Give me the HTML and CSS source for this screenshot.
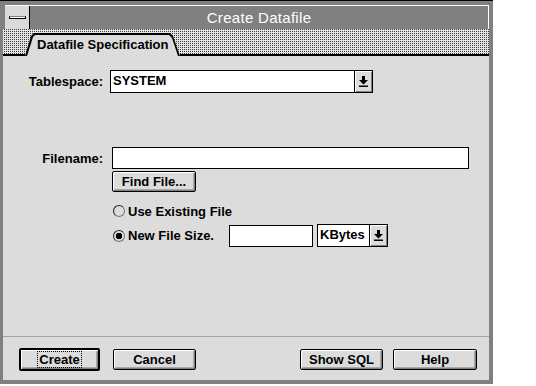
FILE: index.html
```html
<!DOCTYPE html>
<html lang="en">
<head>
    <meta charset="UTF-8">
    <title>Create Datafile</title>
    <link rel="stylesheet" href="styles.css">
</head>
<body>
<div class="window">
    <div class="titlebar">
        <div class="sysmenu"><div class="sysmenu-bar"></div></div>
        <div class="title">Create Datafile</div>
    </div>

    <div class="tabstrip">
        <div class="strip-line strip-left"></div>
        <div class="tab">
            <div class="tab-face">Datafile Specification</div>
        </div>
        <div class="strip-line strip-right"></div>
    </div>

    <div class="content">
        <div class="row row-tablespace">
            <span class="label">Tablespace:</span>
            <div class="combo combo-wide">
                <span class="combo-text">SYSTEM</span>
                <span class="combo-btn">
                    <svg width="9" height="11" viewBox="0 0 9 11"><path d="M3 0h3v4h3L4.5 8.5 0 4h3z"/><rect y="9.5" width="9" height="1.5"/></svg>
                </span>
            </div>
        </div>

        <div class="row row-filename">
            <span class="label">Filename:</span>
            <div class="textbox textbox-filename"></div>
        </div>

        <div class="indent">
            <button class="btn btn-find">Find File...</button>
        </div>

        <div class="row radio-row radio-row-first">
            <span class="radio"></span>
            <span class="radio-text">Use Existing File</span>
        </div>

        <div class="row radio-row radio-row-size">
            <span class="radio radio-on"></span>
            <span class="radio-text radio-text-size">New File Size.</span>
            <div class="textbox textbox-size"></div>
            <div class="combo combo-unit">
                <span class="combo-text">KBytes</span>
                <span class="combo-btn">
                    <svg width="9" height="11" viewBox="0 0 9 11"><path d="M3 0h3v4h3L4.5 8.5 0 4h3z"/><rect y="9.5" width="9" height="1.5"/></svg>
                </span>
            </div>
        </div>

        <div class="footer">
            <button class="btn btn-default"><span class="focus">Create</span></button>
            <button class="btn btn-cancel">Cancel</button>
            <button class="btn btn-sql">Show SQL</button>
            <button class="btn btn-help">Help</button>
        </div>
    </div>
</div>
</body>
</html>
```

FILE: styles.css
```css
* {
    box-sizing: border-box;
}

body {
    margin: 0;
    background: #fff;
    font-family: "Liberation Sans", Arial, sans-serif;
    font-size: 13px;
    font-weight: bold;
    color: #000;
}

.window {
    width: 493px;
    height: 384px;
    background: #808080;
    border-top: 1px solid #000;
    padding: 4px 4px 4px 3px;
    display: flex;
    flex-direction: column;
}

/* title bar */
.titlebar {
    height: 24px;
    margin-left: 2px;
    border-top: 1px solid #fff;
    border-right: 1px solid #fff;
    display: flex;
}

.sysmenu {
    width: 25px;
    background: #dadada;
    border-right: 1px solid #000;
    display: flex;
    align-items: center;
    justify-content: center;
}

.sysmenu-bar {
    width: 17px;
    height: 3px;
    background: #fff;
    border: 1px solid #000;
    border-top-color: #808080;
}

.title {
    flex: 1;
    text-align: center;
    color: #fff;
    font-size: 15px;
    font-weight: normal;
    line-height: 23px;
    letter-spacing: 0.3px;
}

/* tab strip */
.tabstrip {
    height: 27px;
    display: flex;
    align-items: flex-end;
    background-color: #e4e4e4;
    background-image: conic-gradient(#3a3a3a 0 25%, transparent 0);
    background-size: 2px 2px;
}

.strip-line {
    height: 2px;
    background: #000;
}

.strip-left {
    width: 22px;
}

.strip-right {
    flex: 1;
}

.tab {
    width: 155px;
    height: 23px;
    background: #000;
    padding: 2px 2px 0 2px;
    clip-path: polygon(0 100%, 6px 3px, 9px 0, calc(100% - 10px) 0, calc(100% - 7px) 3px, 100% 100%);
}

.tab-face {
    height: 100%;
    background: #dcdcdc;
    padding-left: 10px;
    line-height: 19px;
    clip-path: polygon(0 100%, 6px 2px, 8px 0, calc(100% - 9px) 0, calc(100% - 6px) 3px, 100% 100%);
}

/* dialog body */
.content {
    flex: 1;
    background: #dcdcdc;
    display: flex;
    flex-direction: column;
    padding-top: 14px;
}

.row {
    display: flex;
    align-items: center;
}

.label {
    width: 100px;
    text-align: right;
}

.row-tablespace {
    height: 23px;
}

.row-filename {
    margin-top: 54px;
    height: 22px;
}

.textbox {
    background: #fff;
    border: 1px solid #000;
}

.textbox-filename {
    margin-left: 9px;
    width: 357px;
    height: 22px;
}

.combo {
    display: flex;
    background: #fff;
    border: 1px solid #000;
}

.combo-wide {
    margin-left: 7px;
    width: 263px;
    height: 23px;
}

.combo-text {
    flex: 1;
    padding-left: 2px;
    line-height: 20px;
}

.combo-btn {
    width: 18px;
    background: #dcdcdc;
    border-left: 1px solid #000;
    box-shadow: inset 1px 1px #fff, inset -1px -1px #808080;
    display: flex;
    align-items: center;
    justify-content: center;
}

.indent {
    padding-left: 109px;
    margin-top: 2px;
}

.btn {
    font: inherit;
    color: #000;
    background: #dcdcdc;
    border: 1px solid #000;
    border-radius: 2px;
    box-shadow: inset 1px 1px #fff, inset -1px -1px #808080, inset -2px -2px #a8a8a8;
    padding: 0;
    height: 21px;
}

.btn-find {
    width: 84px;
}

.radio-row {
    padding-left: 110px;
}

.radio-row-first {
    margin-top: 10px;
    height: 18px;
}

.radio-row-size {
    margin-top: 4px;
    height: 23px;
}

.radio {
    width: 12px;
    height: 12px;
    border-radius: 50%;
    border: 1px solid #222;
    border-right-color: #777;
    border-bottom-color: #777;
    background: #dcdcdc;
}

.radio-on {
    background: radial-gradient(circle, #000 0 3px, #dcdcdc 3.5px);
}

.radio-text {
    margin-left: 3px;
}

.radio-text-size {
    width: 101px;
}

.textbox-size {
    width: 84px;
    height: 22px;
}

.combo-unit {
    margin-left: 4px;
    width: 71px;
    height: 23px;
}

/* footer buttons */
.footer {
    margin-top: auto;
    border-top: 1px solid #a4a4a4;
    padding: 11px 12px 9px 16px;
    display: flex;
    align-items: center;
    height: 44px;
}

.btn-default {
    width: 81px;
    height: 23px;
    border-width: 2px;
}

.focus {
    outline: 1px dotted #000;
    padding: 0 1px;
}

.btn-cancel {
    width: 83px;
    margin-left: 13px;
}

.btn-sql {
    width: 83px;
    margin-left: auto;
}

.btn-help {
    width: 84px;
    margin-left: 10px;
}
```
